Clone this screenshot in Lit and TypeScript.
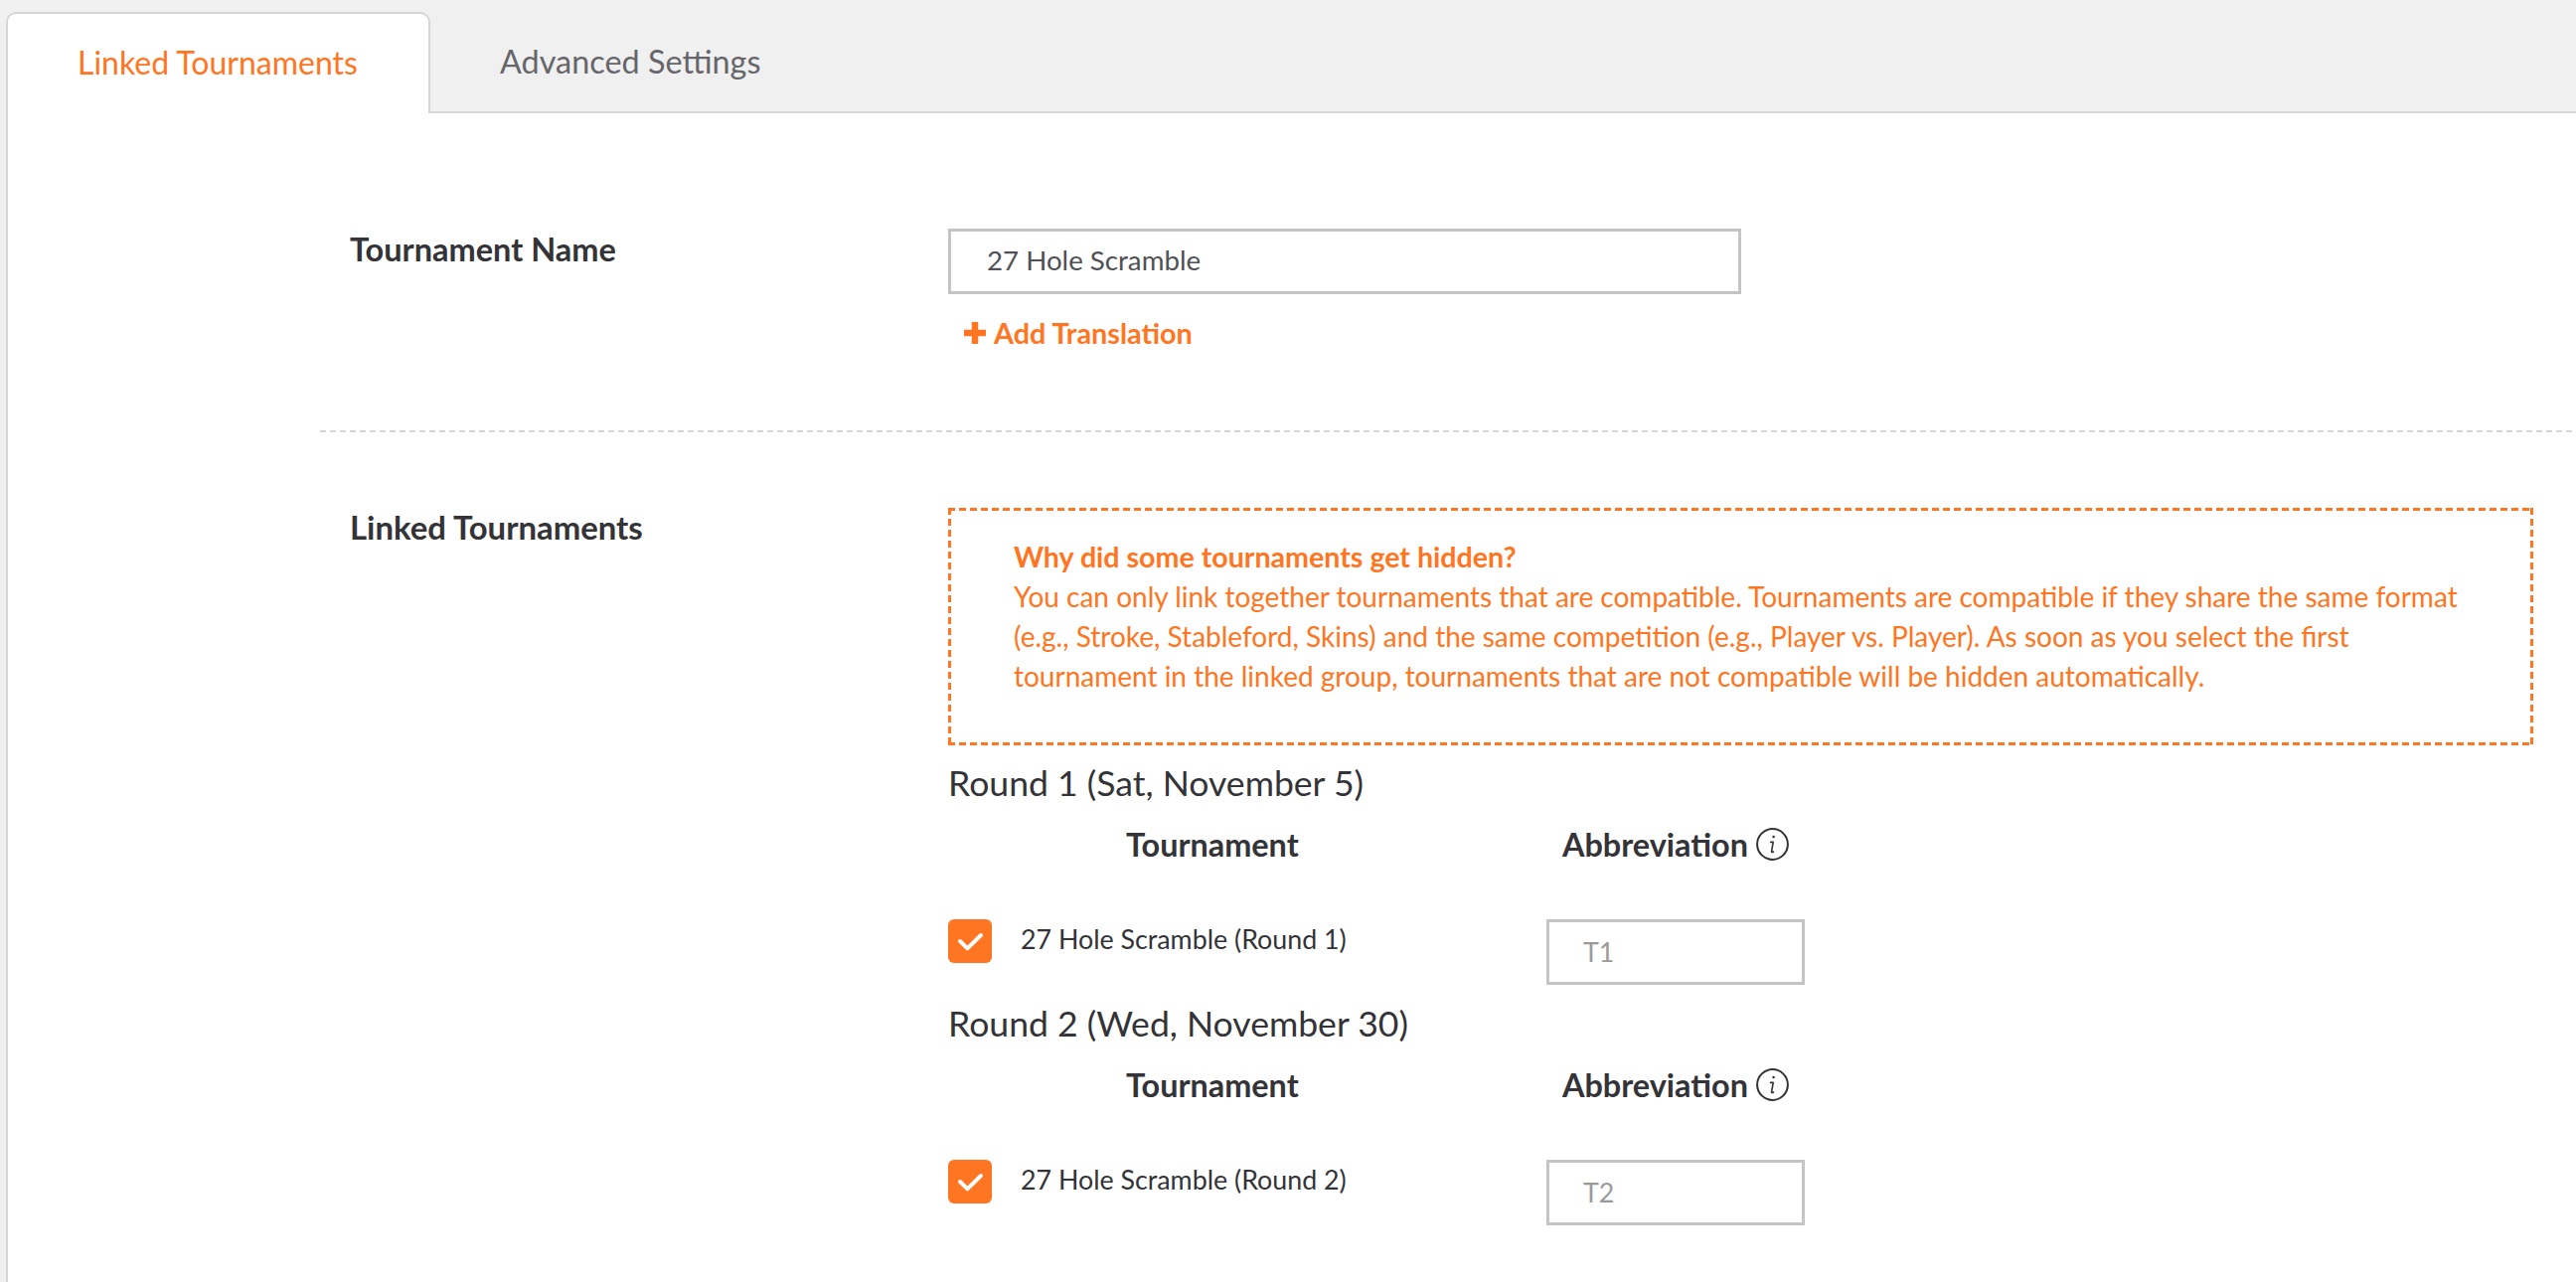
import { LitElement, html, css, svg } from "lit";
import { customElement } from "lit/decorators.js";

const rounds = [
  { title: "Round 1 (Sat, November 5)", name: "27 Hole Scramble (Round 1)", abbr: "T1" },
  { title: "Round 2 (Wed, November 30)", name: "27 Hole Scramble (Round 2)", abbr: "T2" },
];

@customElement("app-root")
export class AppRoot extends LitElement {
  static styles = css`
    :host {
      display: block;
      width: 2592px;
      height: 1290px;
      overflow: hidden;
      background: #f0f0f0;
      font-family: Lato, "Liberation Sans", sans-serif;
      color: #333338;
    }
    .tabbar {
      height: 102px;
      padding: 12px 0 0 6px;
      display: flex;
      background: #f0f0f0;
    }
    .tab {
      box-sizing: border-box;
      height: 102px;
      font-size: 32px;
      display: flex;
      line-height: 40px;
    }
    .tab.active {
      width: 427px;
      padding: 29px 0 0 70px;
      background: #fff;
      color: #ff7521;
      border: 2px solid #d6d6d6;
      border-bottom: none;
      border-radius: 10px 10px 0 0;
    }
    .tab.other {
      flex: 1;
      padding: 30px 0 0 70px;
      font-size: 32.4px;
      color: #66666a;
      border-bottom: 2px solid #d6d6d6;
    }
    main {
      margin-left: 6px;
      height: 1176px;
      background: #fff;
      border-left: 2px solid #d6d6d6;
      padding-left: 314px;
    }
    .section {
      display: flex;
      padding-left: 30px;
    }
    .section.first {
      box-sizing: border-box;
      padding-top: 116px;
      height: 321px;
      background: repeating-linear-gradient(90deg, #d6d6d6 0 6px, transparent 6px 10px) left bottom / 100% 2px no-repeat;
    }
    .section.second {
      padding-top: 76px;
    }
    .label {
      width: 602px;
      flex: none;
      font-size: 32.5px;
      font-weight: 700;
      line-height: 40px;
    }
    .first .label { margin-top: 1px; }
    .second .label { margin-top: 0; font-size: 32.9px; }
    .field {
      box-sizing: border-box;
      width: 798px;
      height: 66px;
      border: 3px solid #c4c4c4;
      padding-left: 36px;
      font-size: 27.7px;
      line-height: 58px;
      color: #505055;
    }
    .add {
      display: flex;
      align-items: center;
      gap: 8px;
      margin: 21px 0 0 16px;
      color: #ff7521;
      font-size: 28.8px;
      font-weight: 700;
      line-height: 36px;
    }
    .add svg { width: 22px; height: 22px; }
    .content { width: 1595px; }
    .notice {
      box-sizing: border-box;
      height: 239px;
      padding: 29px 0 0 66px;
      color: #ff7521;
      font-size: 28px;
      line-height: 40px;
      background:
        repeating-linear-gradient(90deg, #ff7521 0 7px, transparent 7px 11px) left top / 100% 3px no-repeat,
        repeating-linear-gradient(90deg, #ff7521 0 7px, transparent 7px 11px) left bottom / 100% 3px no-repeat,
        repeating-linear-gradient(180deg, #ff7521 0 7px, transparent 7px 11px) left top / 3px 100% no-repeat,
        repeating-linear-gradient(180deg, #ff7521 0 7px, transparent 7px 11px) right top / 3px 100% no-repeat;
    }
    .notice b { display: block; font-weight: 700; font-size: 28.6px; }
    .round { height: 242px; }
    h3 {
      margin: 0;
      padding-top: 18px;
      font-size: 35.6px;
      font-weight: 400;
      line-height: 40px;
      color: #333338;
    }
    .cols {
      display: flex;
      margin-top: 22px;
      height: 40px;
      font-size: 32.4px;
      font-weight: 700;
      line-height: 40px;
    }
    .col-t { width: 179px; margin-left: 179px; margin-right: 260px; }
    .col-a { display: flex; align-items: center; gap: 8px; }
    .col-a svg { width: 33px; height: 33px; margin-top: -2px; }
    .row { display: flex; margin-top: 55px; }
    .check {
      width: 44px;
      height: 44px;
      flex: none;
      background: #ff7521;
      border-radius: 6px;
    }
    .check svg { display: block; width: 44px; height: 44px; }
    .name {
      width: 558px;
      flex: none;
      padding-left: 29px;
      box-sizing: border-box;
      font-size: 26.8px;
      line-height: 40px;
      color: #333338;
    }
    .abbr {
      box-sizing: border-box;
      width: 260px;
      height: 66px;
      border: 3px solid #c4c4c4;
      padding-left: 34px;
      font-size: 26.8px;
      line-height: 60px;
      color: #9a9a9a;
    }
  `;

  private info() {
    return html`<svg viewBox="0 0 33 33" fill="none">
      <circle cx="16.5" cy="16.5" r="15.4" stroke="#333338" stroke-width="2"></circle>
      ${svg`<circle cx="17.6" cy="9" r="1.3" fill="#333338"></circle>
      <path d="M14.6 14.4h2.6l-1.6 9.2c-.2 1.1.6 1.3 1.9.4" stroke="#333338" stroke-width="1.6" stroke-linecap="round" stroke-linejoin="round"></path>`}
    </svg>`;
  }

  render() {
    return html`
      <div class="tabbar">
        <div class="tab active">Linked Tournaments</div>
        <div class="tab other">Advanced Settings</div>
      </div>
      <main>
        <div class="section first">
          <div class="label">Tournament Name</div>
          <div>
            <div class="field">27 Hole Scramble</div>
            <div class="add">
              <svg viewBox="0 0 22 22"><path d="M7.8 0h6.4v7.8H22v6.4h-7.8V22H7.8v-7.8H0V7.8h7.8z" fill="#ff7521"></path></svg>
              <span>Add Translation</span>
            </div>
          </div>
        </div>
        <div class="section second">
          <div class="label">Linked Tournaments</div>
          <div class="content">
            <div class="notice">
              <b>Why did some tournaments get hidden?</b>
              You can only link together tournaments that are compatible. Tournaments are compatible if they share the same format<br />
              (e.g., Stroke, Stableford, Skins) and the same competition (e.g., Player vs. Player). As soon as you select the first<br />
              tournament in the linked group, tournaments that are not compatible will be hidden automatically.
            </div>
            ${rounds.map(
              (r) => html`<div class="round">
                <h3>${r.title}</h3>
                <div class="cols">
                  <div class="col-t">Tournament</div>
                  <div class="col-a">Abbreviation ${this.info()}</div>
                </div>
                <div class="row">
                  <div class="check">
                    <svg viewBox="0 0 44 44" fill="none"><path d="M12 22l7.4 7.4L33 16" stroke="#fff" stroke-width="4" stroke-linecap="round" stroke-linejoin="round"></path></svg>
                  </div>
                  <div class="name">${r.name}</div>
                  <div class="abbr">${r.abbr}</div>
                </div>
              </div>`
            )}
          </div>
        </div>
      </main>
    `;
  }
}
